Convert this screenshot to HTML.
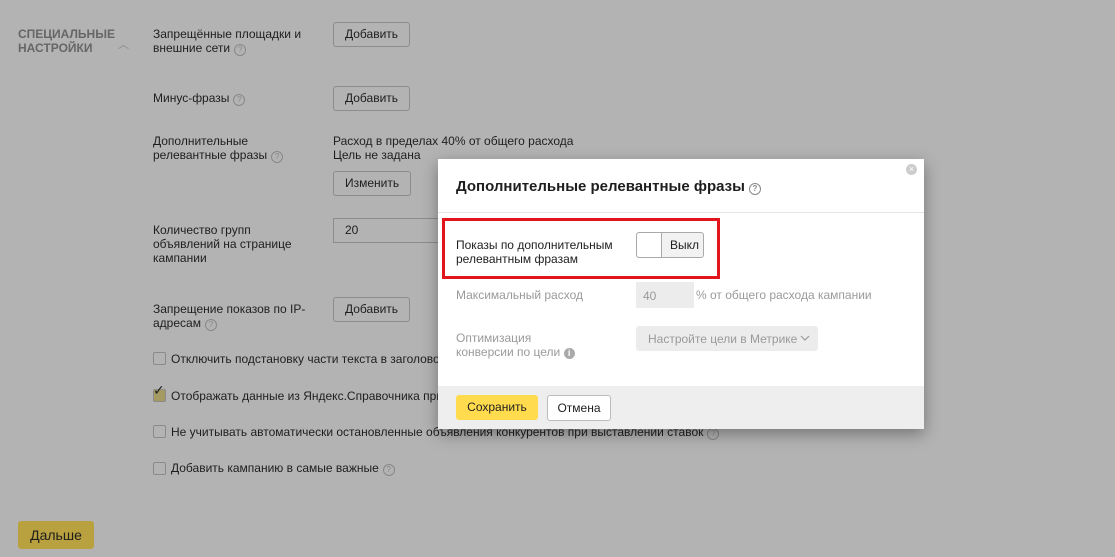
<!DOCTYPE html>
<html><head><meta charset="utf-8"><style>
body{margin:0;width:1115px;height:557px;background:#b3b3b3;font-family:"Liberation Sans","DejaVu Sans",sans-serif;font-size:12px;color:#1e1e1e;position:relative;overflow:hidden}
.a{position:absolute;line-height:14px;white-space:nowrap}
.btn{position:absolute;border:1px solid #8c8c8c;border-radius:3px;line-height:23px;padding:0 11px;font-size:12px;box-sizing:border-box;height:25px}
.q{display:inline-block;width:10px;height:10px;border:1px solid #888;border-radius:50%;font-size:8px;line-height:10px;text-align:center;color:#888;vertical-align:0px;margin-left:4px}
.cb{position:absolute;width:11px;height:11px;border:1px solid #8a8a8a;border-radius:2px}
.m{position:absolute;left:438px;top:159px;width:486px;height:270px;background:#fff;box-shadow:0 5px 15px rgba(0,0,0,.35)}
.gt{color:#9a9a9a}
</style></head><body>
<div class="a" style="left:18px;top:27px;font-weight:bold;color:#666;font-size:12px">СПЕЦИАЛЬНЫЕ<br>НАСТРОЙКИ</div>
<div class="a" style="left:118px;top:38px;color:#888;font-size:11px">︿</div>
<div class="a" style="left:153px;top:27px">Запрещённые площадки и<br>внешние сети<span class="q">?</span></div>
<div class="btn" style="left:333px;top:22px">Добавить</div>
<div class="a" style="left:153px;top:91px">Минус-фразы<span class="q">?</span></div>
<div class="btn" style="left:333px;top:86px">Добавить</div>
<div class="a" style="left:153px;top:134px">Дополнительные<br>релевантные фразы<span class="q">?</span></div>
<div class="a" style="left:333px;top:134px">Расход в пределах 40% от общего расхода<br>Цель не задана</div>
<div class="btn" style="left:333px;top:171px">Изменить</div>
<div class="a" style="left:153px;top:223px">Количество групп<br>объявлений на странице<br>кампании</div>
<div class="btn" style="left:333px;top:218px;width:120px;border-radius:0">20</div>
<div class="a" style="left:153px;top:302px">Запрещение показов по IP-<br>адресам<span class="q">?</span></div>
<div class="btn" style="left:333px;top:297px">Добавить</div>
<div class="cb" style="left:153px;top:352px"></div><div class="a" style="left:171px;top:352px">Отключить подстановку части текста в заголовок</div>
<div class="cb" style="left:153px;top:389px;background:#a49a62"></div><div class="a" style="left:153px;top:383px;font-size:14px;font-weight:bold">✓</div><div class="a" style="left:171px;top:389px">Отображать данные из Яндекс.Справочника при</div>
<div class="cb" style="left:153px;top:425px"></div><div class="a" style="left:171px;top:425px">Не учитывать автоматически остановленные объявления конкурентов при выставлении ставок<span class="q">?</span></div>
<div class="cb" style="left:153px;top:462px"></div><div class="a" style="left:171px;top:461px">Добавить кампанию в самые важные<span class="q">?</span></div>
<div style="position:absolute;left:18px;top:521px;width:76px;height:28px;background:#b9a13f;border-radius:3px;line-height:28px;text-align:center;font-size:14px">Дальше</div>

<div class="m">
<div style="position:absolute;right:7px;top:5px;width:11px;height:11px;border-radius:50%;background:#ccc;color:#fff;font-size:9px;line-height:11px;text-align:center">×</div>
<div class="a" style="left:18px;top:19px;font-size:15px;font-weight:bold;line-height:18px">Дополнительные релевантные фразы<span class="q">?</span></div>
<div style="position:absolute;left:0;top:53px;width:486px;height:1px;background:#e5e5e5"></div>
<div style="position:absolute;left:4px;top:59px;width:278px;height:61px;border:3px solid #e3151c;box-sizing:border-box"></div>
<div class="a" style="left:18px;top:79px;font-size:12px">Показы по дополнительным<br>релевантным фразам</div>
<div style="position:absolute;left:198px;top:73px;width:68px;height:26px;border:1px solid #aaa;border-radius:3px;background:#f2f2f2;box-sizing:border-box">
<div style="position:absolute;left:0;top:0;width:24px;height:24px;background:#fff;border-right:1px solid #aaa;border-radius:3px 0 0 3px"></div>
<div class="a" style="left:33px;top:5px;font-size:12px">Выкл</div></div>
<div class="a gt" style="left:18px;top:129px">Максимальный расход</div>
<div style="position:absolute;left:198px;top:123px;width:58px;height:26px;background:#ececec"></div>
<div class="a gt" style="left:205px;top:130px">40</div>
<div class="a gt" style="left:258px;top:129px">% от общего расхода кампании</div>
<div class="a gt" style="left:18px;top:172px">Оптимизация<br>конверсии по цели <span style="display:inline-block;width:11px;height:11px;border-radius:50%;background:#aaa;color:#fff;font-size:9px;line-height:11px;text-align:center;font-weight:bold">i</span></div>
<div style="position:absolute;left:198px;top:167px;width:182px;height:25px;background:#ececec;border-radius:3px"></div>
<div class="a gt" style="left:210px;top:173px">Настройте цели в Метрике</div>
<svg style="position:absolute;left:362px;top:176px" width="10" height="7"><path d="M1 1l4 4 4-4" fill="none" stroke="#999" stroke-width="1.2"/></svg>
<div style="position:absolute;left:0;top:227px;width:486px;height:43px;background:#eee"></div>
<div style="position:absolute;left:18px;top:236px;width:82px;height:25px;background:#ffdb4d;border-radius:3px;line-height:25px;text-align:center;font-size:12px">Сохранить</div>
<div style="position:absolute;left:109px;top:236px;width:64px;height:26px;border:1px solid #bbb;background:#fff;border-radius:3px;box-sizing:border-box;line-height:24px;text-align:center;font-size:12px">Отмена</div>
</div>
</body></html>
